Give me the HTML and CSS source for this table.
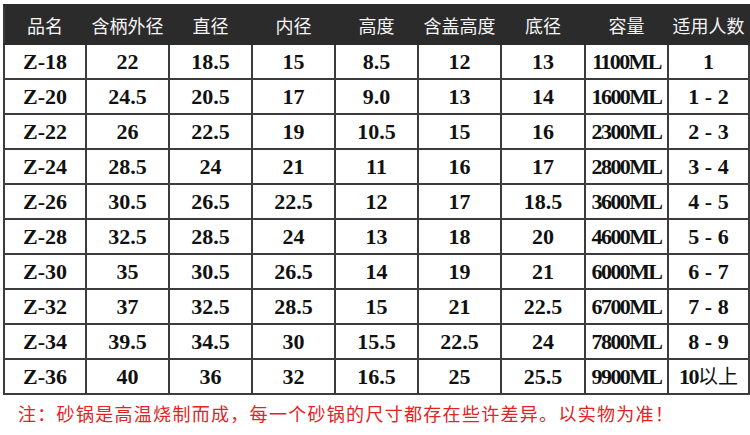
FILE: index.html
```html
<!DOCTYPE html>
<html>
<head>
<meta charset="utf-8">
<link rel="stylesheet" href="styles.css">
</head>
<body>
<div class="page">
<table class="spec">
<colgroup>
<col class="c1"><col class="c2"><col class="c3"><col class="c4"><col class="c5"><col class="c6"><col class="c7"><col class="c8"><col class="c9">
</colgroup>
<thead>
<tr><th>品名</th><th>含柄外径</th><th>直径</th><th>内径</th><th>高度</th><th>含盖高度</th><th>底径</th><th>容量</th><th>适用人数</th></tr>
</thead>
<tbody>
<tr><td>Z-18</td><td>22</td><td>18.5</td><td>15</td><td>8.5</td><td>12</td><td>13</td><td class="ml">1100ML</td><td>1</td></tr>
<tr><td>Z-20</td><td>24.5</td><td>20.5</td><td>17</td><td>9.0</td><td>13</td><td>14</td><td class="ml">1600ML</td><td>1 - 2</td></tr>
<tr><td>Z-22</td><td>26</td><td>22.5</td><td>19</td><td>10.5</td><td>15</td><td>16</td><td class="ml">2300ML</td><td>2 - 3</td></tr>
<tr><td>Z-24</td><td>28.5</td><td>24</td><td>21</td><td>11</td><td>16</td><td>17</td><td class="ml">2800ML</td><td>3 - 4</td></tr>
<tr><td>Z-26</td><td>30.5</td><td>26.5</td><td>22.5</td><td>12</td><td>17</td><td>18.5</td><td class="ml">3600ML</td><td>4 - 5</td></tr>
<tr><td>Z-28</td><td>32.5</td><td>28.5</td><td>24</td><td>13</td><td>18</td><td>20</td><td class="ml">4600ML</td><td>5 - 6</td></tr>
<tr><td>Z-30</td><td>35</td><td>30.5</td><td>26.5</td><td>14</td><td>19</td><td>21</td><td class="ml">6000ML</td><td>6 - 7</td></tr>
<tr><td>Z-32</td><td>37</td><td>32.5</td><td>28.5</td><td>15</td><td>21</td><td>22.5</td><td class="ml">6700ML</td><td>7 - 8</td></tr>
<tr><td>Z-34</td><td>39.5</td><td>34.5</td><td>30</td><td>15.5</td><td>22.5</td><td>24</td><td class="ml">7800ML</td><td>8 - 9</td></tr>
<tr><td>Z-36</td><td>40</td><td>36</td><td>32</td><td>16.5</td><td>25</td><td>25.5</td><td class="ml">9900ML</td><td class="ml">10<span class="cjk">以上</span></td></tr>
</tbody>
</table>
<p class="note">注：砂锅是高温烧制而成，每一个砂锅的尺寸都存在些许差异。以实物为准！</p>
</div>
</body>
</html>
```
FILE: styles.css
```css
html, body {
  margin: 0;
  padding: 0;
  background: #ffffff;
}
.page {
  padding: 4px 0 0 3px;
  width: 750px;
  height: 435px;
  box-sizing: border-box;
}
.spec {
  border-collapse: collapse;
  table-layout: fixed;
  width: 745px;
}
.c1 { width: 82px; }
.c2 { width: 83px; }
.c3 { width: 83px; }
.c4 { width: 83px; }
.c5 { width: 83px; }
.c6 { width: 83px; }
.c7 { width: 84px; }
.c8 { width: 83px; }
.c9 { width: 81px; }
.spec th {
  background: #2b2b2b;
  color: #f4f4f4;
  font-family: "Noto Sans CJK SC", sans-serif;
  font-weight: normal;
  font-size: 18px;
  height: 39px;
  padding: 0;
  border: 2px solid #2b2b2b;
  border-left-color: #3a3a3a;
  text-align: center;
  vertical-align: middle;
  box-sizing: border-box;
}
.spec td {
  font-family: "Liberation Serif", "Noto Sans CJK SC", serif;
  font-weight: bold;
  font-size: 22px;
  color: #111111;
  height: 35px;
  padding: 0;
  border: 2px solid #3c3c3c;
  text-align: center;
  vertical-align: middle;
  box-sizing: border-box;
  line-height: 1;
}
.spec td.ml {
  letter-spacing: -1.6px;
}
.cjk {
  font-family: "Noto Sans CJK SC", sans-serif;
  font-weight: normal;
  font-size: 20px;
  letter-spacing: 0;
}
.note {
  margin: 6px 0 0 15px;
  font-family: "Noto Sans CJK SC", sans-serif;
  font-size: 18px;
  color: #e32222;
  letter-spacing: 1.3px;
  line-height: 24px;
}
```
